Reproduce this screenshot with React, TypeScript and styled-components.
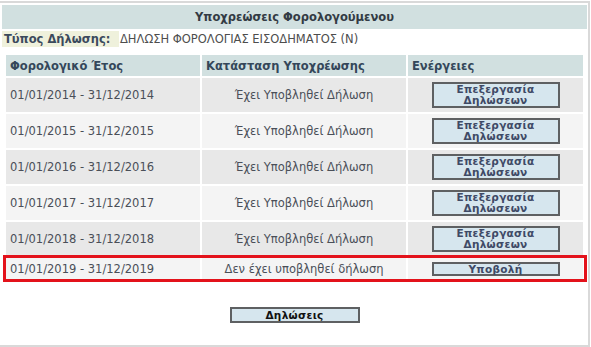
import React from "react";
import styled, { createGlobalStyle } from "styled-components";

const rows = [
  { period: "01/01/2014 - 31/12/2014", status: "Έχει Υποβληθεί Δήλωση", submitted: true },
  { period: "01/01/2015 - 31/12/2015", status: "Έχει Υποβληθεί Δήλωση", submitted: true },
  { period: "01/01/2016 - 31/12/2016", status: "Έχει Υποβληθεί Δήλωση", submitted: true },
  { period: "01/01/2017 - 31/12/2017", status: "Έχει Υποβληθεί Δήλωση", submitted: true },
  { period: "01/01/2018 - 31/12/2018", status: "Έχει Υποβληθεί Δήλωση", submitted: true },
  { period: "01/01/2019 - 31/12/2019", status: "Δεν έχει υποβληθεί δήλωση", submitted: false },
];

const App = () => {
  return (
    <Frame>
      <GlobalStyle />
      <Title>Υποχρεώσεις Φορολογούμενου</Title>

      <TypeRow>
        <TypeLabel>Τύπος Δήλωσης:</TypeLabel>
        <TypeValue>ΔΗΛΩΣΗ ΦΟΡΟΛΟΓΙΑΣ ΕΙΣΟΔΗΜΑΤΟΣ (Ν)</TypeValue>
      </TypeRow>

      <Table>
        <Row>
          <HeadCell>Φορολογικό Έτος</HeadCell>
          <HeadCell>Κατάσταση Υποχρέωσης</HeadCell>
          <HeadCell>Ενέργειες</HeadCell>
        </Row>
        {rows.map((r, i) => (
          <Row key={r.period} $highlight={!r.submitted}>
            <Cell $odd={i % 2 === 1}>{r.period}</Cell>
            <Cell $odd={i % 2 === 1} $center>
              {r.status}
            </Cell>
            <Cell $odd={i % 2 === 1} $center>
              {r.submitted ? (
                <ActionButton>
                  Επεξεργασία
                  <br />
                  Δηλώσεων
                </ActionButton>
              ) : (
                <ActionButton $single>Υποβολή</ActionButton>
              )}
            </Cell>
          </Row>
        ))}
      </Table>

      <Footer>
        <MainButton>Δηλώσεις</MainButton>
      </Footer>
    </Frame>
  );
};

export default App;

const GlobalStyle = createGlobalStyle`
  body {
    margin: 0;
    background: #fff;
    font-family: "DejaVu Sans", Verdana, sans-serif;
  }
`;

const Frame = styled.div`
  box-sizing: border-box;
  width: 590px;
  height: 346px;
  margin-top: 1px;
  padding: 2px 1px 0 2px;
  border-top: 2px solid #d9d9d9;
  border-right: 2px solid #d9d9d9;
  border-bottom: 2px solid #d9d9d9;
`;

const Title = styled.div`
  height: 24px;
  background: #d1e0e0;
  display: flex;
  align-items: center;
  justify-content: center;
  font-size: 11.5px;
  font-weight: bold;
  color: #333b44;
`;

const TypeRow = styled.div`
  display: flex;
  align-items: center;
  height: 16px;
  margin-top: 2px;
  font-size: 11.5px;
`;

const TypeLabel = styled.div`
  box-sizing: border-box;
  width: 117px;
  height: 100%;
  padding-left: 2px;
  display: flex;
  align-items: center;
  background: #eff1dc;
  font-weight: bold;
  color: #3b4a5c;
`;

const TypeValue = styled.div`
  color: #4d4d4d;
  padding-left: 1px;
`;

const Table = styled.div`
  display: flex;
  flex-direction: column;
  gap: 2px;
  width: 577px;
  margin: 8px 0 0 4px;
  font-size: 11.5px;
`;

const Row = styled.div<{ $highlight?: boolean }>`
  position: relative;
  display: grid;
  grid-template-columns: 194px 204px 175px;
  gap: 2px;

  &::after {
    content: "";
    display: ${(p) => (p.$highlight ? "block" : "none")};
    position: absolute;
    top: -3px;
    left: -3px;
    right: -4px;
    bottom: -2px;
    border: 3px solid #e3121b;
    pointer-events: none;
  }
`;

const HeadCell = styled.div`
  height: 21px;
  padding-left: 4px;
  display: flex;
  align-items: center;
  background: #d1e0e0;
  font-weight: bold;
  color: #34475a;
`;

const Cell = styled.div<{ $odd?: boolean; $center?: boolean }>`
  min-height: 22px;
  padding: 4px;
  box-sizing: border-box;
  display: flex;
  align-items: center;
  justify-content: ${(p) => (p.$center ? "center" : "flex-start")};
  background: ${(p) => (p.$odd ? "#f4f4f4" : "#e8e8e8")};
  color: #4a4f58;
`;

const ActionButton = styled.div<{ $single?: boolean }>`
  box-sizing: border-box;
  width: 128px;
  height: ${(p) => (p.$single ? "14px" : "26px")};
  border: 2px solid #5e6062;
  background: #d6e6ee;
  display: flex;
  align-items: center;
  justify-content: center;
  text-align: center;
  font-size: 10.5px;
  line-height: 11px;
  letter-spacing: 0.3px;
  font-weight: bold;
  color: #3f4a66;
`;

const Footer = styled.div`
  display: flex;
  justify-content: center;
  margin-top: 27px;
`;

const MainButton = styled.div`
  box-sizing: border-box;
  width: 130px;
  height: 16px;
  border: 2px solid #5e6062;
  background: #d6e6ee;
  display: flex;
  align-items: center;
  justify-content: center;
  font-size: 10.5px;
  letter-spacing: 0.3px;
  font-weight: bold;
  color: #111;
`;
